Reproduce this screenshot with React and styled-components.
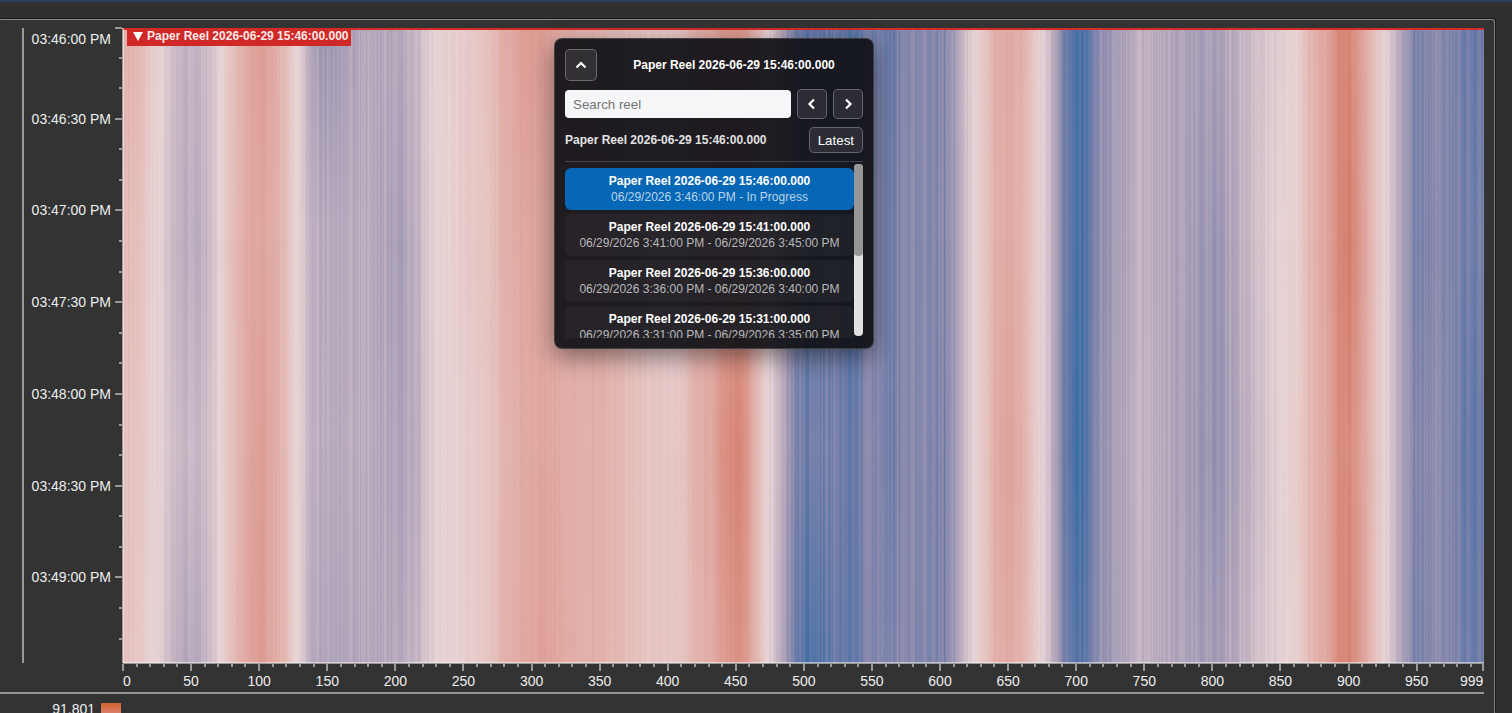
import React from "react"
import styled, { createGlobalStyle } from "styled-components"

const GlobalStyle = createGlobalStyle`
  * {
    box-sizing: border-box;
  }
  body {
    margin: 0;
    background-color: #303030;
    font-family: "Liberation Sans", Arial, sans-serif;
    color: #eee;
  }
`

const Page = styled.div`
  display: flex;
  flex-direction: column;
  height: 100vh;
  overflow: hidden;
`

const TopStrip = styled.div`
  flex: none;
  height: 2px;
  background-color: #2a3f5f;
`

const Panel = styled.main`
  flex: 1;
  min-height: 0;
  display: flex;
  flex-direction: column;
  margin: 17px 17px 0 0;
  padding: 8px 10px 0 0;
  background-color: #333;
  border-top: 1px solid #858585;
  border-right: 1px solid #858585;
  border-top-right-radius: 3px;
  box-shadow: 1px -1px 0 #181818;
`

const ChartRow = styled.section`
  flex: 1;
  min-height: 0;
  display: flex;
`

const TimeAxis = styled.svg`
  flex: none;
  z-index: 1;
  width: 101px;
  height: 100%;
  margin-left: 22px;
  overflow: visible;
  border-left: 2px solid #999;
`

const PlotArea = styled.div`
  position: relative;
  flex: 1;
  min-width: 0;
`

const HeatmapSvg = styled.svg`
  display: block;
  width: 100%;
  height: 100%;
`

const PositionAxis = styled.svg`
  flex: none;
  z-index: 1;
  display: block;
  height: 29px;
  width: calc(100% - 123px);
  margin-left: 123px;
  overflow: visible;
`

const AxisText = styled.text`
  font-size: 14px;
  fill: #eee;
`

const AxisLine = styled.line`
  stroke: rgba(255, 255, 255, 0.5);
  stroke-width: 2px;
  shape-rendering: crispEdges;
`

const ReelMarker = styled.div`
  position: absolute;
  top: 0;
  left: 0;
  right: 0;
  border-top: 2px solid #d42b28;
`

const ReelTag = styled.div`
  display: flex;
  gap: 4px;
  width: max-content;
  margin-left: 4px;
  padding: 0 3px 4px 6px;
  font-size: 12px;
  line-height: 12px;
  font-weight: bold;
  color: #fbe9e9;
  background-color: #cf2826;
`

const Popup = styled.aside`
  position: absolute;
  top: 10px;
  left: 431px;
  width: 320px;
  display: flex;
  flex-direction: column;
  gap: 8px;
  padding: 10px;
  border: 1px solid rgba(255, 255, 255, 0.16);
  border-radius: 8px;
  background-color: rgba(18, 18, 23, 0.94);
  box-shadow: 0 8px 24px rgba(0, 0, 0, 0.45);
`

const PopupRow = styled.div`
  display: flex;
  align-items: center;
  gap: ${props => props.$gap || 8}px;
`

const Title = styled.h2`
  flex: 1;
  margin: 0;
  font-size: 12px;
  text-align: center;
  color: #fff;
`

const Current = styled.strong`
  flex: 1;
  font-size: 12px;
  color: #e2e2e4;
`

const Button = styled.button`
  display: flex;
  align-items: center;
  justify-content: center;
  padding: 0 8px;
  font-family: inherit;
  color: #fff;
  background-color: rgba(255, 255, 255, 0.09);
  border: 1px solid rgba(255, 255, 255, 0.28);
  border-radius: 5px;
  height: 26px;
`

const IconButton = styled(Button)`
  flex: none;
  width: ${props => props.$size}px;
  height: ${props => props.$size}px;
  padding: 0;
`

const ChevronSvg = styled.svg`
  width: 12px;
  height: 12px;
  fill: none;
  stroke: #fff;
  stroke-width: 2.2;
`

const Search = styled.input`
  flex: 1;
  min-width: 0;
  height: 28px;
  padding: 0 8px;
  font-family: inherit;
  color: #222;
  background-color: #f5f6f8;
  border: 0;
  border-radius: 4px;
  &::placeholder {
    color: #757575;
  }
`

const ListFrame = styled.div`
  display: flex;
  height: 177px;
  border-top: 1px solid rgba(255, 255, 255, 0.18);
`

const ReelList = styled.ul`
  flex: 1;
  display: flex;
  flex-direction: column;
  gap: 4px;
  margin: 0;
  padding: 6px 0 0;
  list-style: none;
  overflow-y: auto;
  scrollbar-width: none;
`

const ReelButton = styled.button`
  display: block;
  width: 100%;
  padding: 5px 4px;
  font-family: inherit;
  font-size: 12px;
  line-height: 16px;
  text-align: center;
  color: ${props => (props.$active ? "#b9d4ea" : "#b9b9bb")};
  background-color: ${props =>
    props.$active ? "#0567b5" : "rgba(255, 255, 255, 0.04)"};
  border: 0;
  border-radius: 6px;
  strong {
    display: block;
    color: #fff;
  }
`

const ScrollTrack = styled.div`
  flex: none;
  width: 9px;
  margin: 2px 0;
  border-radius: 4px;
  background-color: #e1e1e1;
`

const ScrollThumb = styled.div`
  height: 92px;
  border-radius: 4px;
  background-color: #969696;
`

const Legend = styled.footer`
  flex: none;
  display: flex;
  gap: 6px;
  height: 21px;
  padding-top: 9px;
  border-top: 2px solid #969696;
`

const LegendValue = styled.span`
  width: 95px;
  font-size: 14px;
  line-height: 12px;
  text-align: right;
`

const LegendBar = styled.div`
  width: 20px;
  height: 20px;
  background-image: linear-gradient(#d2642c, #d98068 10px);
`

const reels = [
  ["15:46:00.000", "06/29/2026 3:46:00 PM - In Progress"],
  ["15:41:00.000", "06/29/2026 3:41:00 PM - 06/29/2026 3:45:00 PM"],
  ["15:36:00.000", "06/29/2026 3:36:00 PM - 06/29/2026 3:40:00 PM"],
  ["15:31:00.000", "06/29/2026 3:31:00 PM - 06/29/2026 3:35:00 PM"],
]

const times = [
  "03:46:00 PM",
  "03:46:30 PM",
  "03:47:00 PM",
  "03:47:30 PM",
  "03:48:00 PM",
  "03:48:30 PM",
  "03:49:00 PM",
]

// value -> colour
const scale = [
  [-1, 36, 104, 164],
  [-0.7, 104, 122, 168],
  [-0.5, 142, 140, 174],
  [-0.25, 186, 172, 190],
  [0, 232, 212, 213],
  [0.3, 227, 183, 178],
  [0.6, 221, 158, 149],
  [0.8, 216, 138, 122],
  [1, 210, 114, 96],
]

// position, then the value at four moments from first to last
const profile = [
  [0, 0.35, 0.25, 0.2, 0.2],
  [10, 0.3, 0.2, 0.15, 0.12],
  [25, 0.04, 0, 0, -0.02],
  [35, -0.12, -0.15, -0.12, -0.18],
  [50, -0.22, -0.26, -0.18, -0.3],
  [60, -0.15, -0.2, -0.15, -0.2],
  [71, 0, 0.02, 0.02, 0.02],
  [80, 0.2, 0.25, 0.22, 0.25],
  [90, 0.4, 0.42, 0.42, 0.45],
  [100, 0.62, 0.52, 0.62, 0.66],
  [110, 0.45, 0.42, 0.45, 0.45],
  [120, 0.2, 0.22, 0.22, 0.25],
  [128, 0, 0, 0, 0],
  [137, -0.25, -0.18, -0.18, -0.22],
  [147, -0.42, -0.25, -0.25, -0.3],
  [160, -0.35, -0.26, -0.25, -0.3],
  [180, -0.27, -0.25, -0.25, -0.28],
  [202, -0.28, -0.36, -0.32, -0.28],
  [215, -0.18, -0.22, -0.25, -0.2],
  [224, -0.05, -0.06, -0.08, -0.08],
  [236, 0.05, 0.02, 0, 0],
  [255, 0.1, 0.12, 0.08, 0.08],
  [268, 0.2, 0.18, 0.15, 0.15],
  [280, 0.42, 0.38, 0.32, 0.36],
  [295, 0.6, 0.5, 0.45, 0.48],
  [308, 0.6, 0.48, 0.5, 0.56],
  [325, 0.4, 0.42, 0.42, 0.44],
  [350, 0.3, 0.44, 0.38, 0.38],
  [370, 0.2, 0.26, 0.24, 0.24],
  [385, 0.12, 0.16, 0.16, 0.16],
  [400, 0.12, 0.06, 0.12, 0.14],
  [412, 0.2, 0.15, 0.18, 0.18],
  [420, 0.38, 0.35, 0.38, 0.34],
  [433, 0.48, 0.48, 0.5, 0.45],
  [441, 0.62, 0.6, 0.74, 0.62],
  [451, 0.65, 0.66, 0.85, 0.72],
  [459, 0.55, 0.55, 0.66, 0.6],
  [465, 0.3, 0.28, 0.3, 0.32],
  [472, 0.04, 0.04, 0.04, 0.05],
  [479, -0.15, -0.14, -0.12, -0.15],
  [486, -0.38, -0.35, -0.32, -0.38],
  [494, -0.66, -0.62, -0.6, -0.7],
  [506, -0.76, -0.76, -0.68, -0.86],
  [520, -0.68, -0.66, -0.6, -0.7],
  [534, -0.72, -0.74, -0.68, -0.7],
  [548, -0.66, -0.58, -0.54, -0.58],
  [565, -0.66, -0.6, -0.62, -0.56],
  [585, -0.5, -0.52, -0.5, -0.54],
  [603, -0.56, -0.55, -0.6, -0.6],
  [610, -0.4, -0.42, -0.42, -0.42],
  [617, -0.16, -0.18, -0.18, -0.18],
  [626, 0, 0, 0, 0],
  [633, 0.15, 0.16, 0.15, 0.16],
  [641, 0.4, 0.38, 0.44, 0.38],
  [650, 0.46, 0.46, 0.56, 0.46],
  [659, 0.4, 0.38, 0.44, 0.38],
  [666, 0.2, 0.18, 0.2, 0.2],
  [673, 0.02, 0.02, 0.02, 0.02],
  [680, -0.12, -0.12, -0.12, -0.12],
  [687, -0.42, -0.42, -0.45, -0.4],
  [693, -0.72, -0.7, -0.74, -0.68],
  [701, -0.82, -0.82, -0.86, -0.76],
  [709, -0.74, -0.72, -0.72, -0.68],
  [717, -0.5, -0.5, -0.48, -0.48],
  [730, -0.35, -0.34, -0.32, -0.34],
  [745, -0.22, -0.22, -0.2, -0.22],
  [762, -0.26, -0.26, -0.25, -0.26],
  [785, -0.34, -0.36, -0.38, -0.34],
  [802, -0.34, -0.44, -0.46, -0.38],
  [818, -0.22, -0.26, -0.3, -0.26],
  [834, -0.12, -0.12, -0.16, -0.12],
  [850, -0.05, 0, -0.02, -0.04],
  [863, 0.06, 0.06, 0.1, 0.08],
  [872, 0.3, 0.3, 0.28, 0.28],
  [884, 0.5, 0.5, 0.48, 0.48],
  [892, 0.78, 0.76, 0.74, 0.76],
  [900, 0.84, 0.92, 0.8, 0.86],
  [908, 0.6, 0.68, 0.6, 0.66],
  [917, 0.26, 0.28, 0.28, 0.28],
  [925, 0.04, 0.04, 0.04, 0.04],
  [933, -0.15, -0.15, -0.15, -0.15],
  [941, -0.4, -0.4, -0.4, -0.4],
  [950, -0.6, -0.62, -0.56, -0.62],
  [962, -0.5, -0.52, -0.48, -0.5],
  [975, -0.58, -0.58, -0.56, -0.56],
  [985, -0.66, -0.64, -0.7, -0.66],
  [999, -0.68, -0.62, -0.7, -0.66],
]

const samples = Array.from({ length: 1000 }, (_, i) => i)
const moments = [1, 2, 3, 4]

const mix = (rows, at, column) => {
  const x = Math.min(Math.max(at, rows[0][0]), rows[rows.length - 1][0])
  let i = 1
  while (rows[i][0] < x) i++
  const a = rows[i - 1]
  const b = rows[i]
  return a[column] + ((b[column] - a[column]) * (x - a[0])) / (b[0] - a[0])
}

const noise = i => {
  const n = Math.sin(i * 127.1 + 11.7) * 43758.5453
  return (n - Math.floor(n)) * 2 - 1
}

const colorAt = (i, moment) => {
  const base = mix(profile, i, moment)
  const depth = base < 0 ? 0.035 + Math.min(-base, 0.6) * 0.09 : 0.045
  const value = base + noise(i) * depth
  const rgb = [1, 2, 3].map(c => Math.round(mix(scale, value, c)))
  return `rgb(${rgb.join(",")})`
}

const Heatmap = () => (
  <HeatmapSvg
    viewBox="0 0 1000 300"
    preserveAspectRatio="none"
    role="img"
    aria-label="Reel heatmap"
  >
    <defs>
      {moments.slice(1).map(m => (
        <React.Fragment key={m}>
          <linearGradient
            id={`fade${m}`}
            gradientUnits="userSpaceOnUse"
            x1="0"
            x2="0"
            y1={(m - 2) * 100}
            y2={(m - 1) * 100}
          >
            <stop offset="0" stopColor="#fff" stopOpacity="0" />
            <stop offset="1" stopColor="#fff" />
          </linearGradient>
          <mask id={`mask${m}`} maskUnits="userSpaceOnUse" x="0" y="0" width="1000" height="300">
            <rect width="1000" height="300" fill={`url(#fade${m})`} />
          </mask>
        </React.Fragment>
      ))}
    </defs>
    {moments.map(m => (
      <g key={m} mask={m > 1 ? `url(#mask${m})` : undefined} shapeRendering="crispEdges">
        {samples.map(i => (
          <rect key={i} x={i} width="1" height="300" fill={colorAt(i, m)} />
        ))}
      </g>
    ))}
  </HeatmapSvg>
)

const TimeTicks = () => (
  <TimeAxis>
    <AxisLine x1="99" x2="99" y1="0" y2="100%" />
    <AxisLine x1="91" x2="98" y1="0" y2="0" />
    {samples.slice(1, 21).map(k => {
      const y = `${(k * 4.816 - 0.16).toFixed(2)}%`
      return <AxisLine key={k} x1={k % 3 ? 95 : 91} x2="98" y1={y} y2={y} />
    })}
    {times.map((time, k) => (
      <AxisText
        key={time}
        x="87"
        y={k ? `${(k * 14.448 - 0.16).toFixed(2)}%` : 11}
        dy="5"
        textAnchor="end"
      >
        {time}
      </AxisText>
    ))}
  </TimeAxis>
)

const PositionTicks = () => {
  const majors = [...samples.filter(i => i % 50 === 0), 999]
  const minors = samples.filter(i => i % 10 === 0 && i % 50 !== 0)
  const at = i => `${(i / 9.995).toFixed(2)}%`
  return (
    <PositionAxis>
      <AxisLine x1="0" x2="100%" y1="0" y2="0" />
      {minors.map(i => (
        <AxisLine key={i} x1={at(i)} x2={at(i)} y1="1" y2="4" />
      ))}
      {majors.map(i => (
        <AxisLine key={i} x1={at(i)} x2={at(i)} y1="1" y2="8" />
      ))}
      {majors.map(i => (
        <AxisText
          key={i}
          x={at(i)}
          y="23"
          textAnchor={i === 0 ? "start" : i === 999 ? "end" : "middle"}
        >
          {i}
        </AxisText>
      ))}
    </PositionAxis>
  )
}

const chevrons = {
  up: "M1.5 8.5 6 4l4.5 4.5",
  left: "M8 1.5 3.5 6 8 10.5",
  right: "M4 1.5 8.5 6 4 10.5",
}

const Chevron = ({ to }) => (
  <ChevronSvg viewBox="0 0 12 12" aria-hidden="true">
    <path d={chevrons[to]} />
  </ChevronSvg>
)

const ReelPopup = () => (
  <Popup>
    <PopupRow>
      <IconButton $size={32} aria-label="Collapse">
        <Chevron to="up" />
      </IconButton>
      <Title>Paper Reel 2026-06-29 15:46:00.000</Title>
    </PopupRow>
    <PopupRow $gap={6}>
      <Search type="text" placeholder="Search reel" aria-label="Search reel" />
      <IconButton $size={30} aria-label="Previous reel">
        <Chevron to="left" />
      </IconButton>
      <IconButton $size={30} aria-label="Next reel">
        <Chevron to="right" />
      </IconButton>
    </PopupRow>
    <PopupRow>
      <Current>Paper Reel 2026-06-29 15:46:00.000</Current>
      <Button>Latest</Button>
    </PopupRow>
    <ListFrame>
      <ReelList>
        {reels.map(([start, range], i) => (
          <li key={start}>
            <ReelButton $active={i === 0}>
              <strong>Paper Reel 2026-06-29 {start}</strong>
              {range}
            </ReelButton>
          </li>
        ))}
      </ReelList>
      <ScrollTrack>
        <ScrollThumb />
      </ScrollTrack>
    </ListFrame>
  </Popup>
)

export default () => (
  <>
    <GlobalStyle />
    <Page>
      <TopStrip />
      <Panel>
        <ChartRow>
          <TimeTicks />
          <PlotArea>
            <Heatmap />
            <ReelMarker>
              <ReelTag>
                <svg width="10" height="12" viewBox="0 0 10 12" aria-hidden="true">
                  <path d="M0 2h10L5 11z" fill="#fff" />
                </svg>
                Paper Reel 2026-06-29 15:46:00.000
              </ReelTag>
            </ReelMarker>
            <ReelPopup />
          </PlotArea>
        </ChartRow>
        <PositionTicks />
        <Legend>
          <LegendValue>91.801</LegendValue>
          <LegendBar />
        </Legend>
      </Panel>
    </Page>
  </>
)
